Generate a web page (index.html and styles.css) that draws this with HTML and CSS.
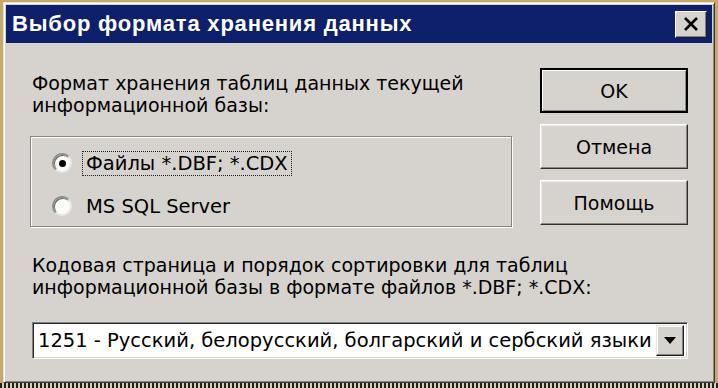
FILE: index.html
```html
<!DOCTYPE html>
<html lang="ru">
<head>
<meta charset="utf-8">
<title>Выбор формата хранения данных</title>
<link rel="stylesheet" href="styles.css">
</head>
<body>
<div class="window">
  <div class="titlebar">
    <span class="title">Выбор формата хранения данных</span>
    <button class="close" type="button" aria-label="Закрыть">
      <svg width="16" height="14" viewBox="0 0 16 14"><path d="M2 1 L14 13 M14 1 L2 13" stroke="#000" stroke-width="2.6" fill="none"/></svg>
    </button>
  </div>
  <div class="content">
    <div class="left">
      <p class="label">Формат хранения таблиц данных текущей<br>информационной базы:</p>
      <div class="group">
        <label class="row">
          <span class="radio checked"></span>
          <span class="rtext focus">Файлы *.DBF; *.CDX</span>
        </label>
        <label class="row">
          <span class="radio"></span>
          <span class="rtext">MS SQL Server</span>
        </label>
      </div>
    </div>
    <div class="buttons">
      <button class="btn default" type="button">OK</button>
      <button class="btn" type="button">Отмена</button>
      <button class="btn" type="button">Помощь</button>
    </div>
    <p class="label label2">Кодовая страница и порядок сортировки для таблиц<br>информационной базы в формате файлов *.DBF; *.CDX:</p>
    <div class="combo">
      <span class="ctext">1251 - Русский, белорусский, болгарский и сербский языки</span>
      <span class="drop"><svg width="12" height="7" viewBox="0 0 12 7"><path d="M0 0 H12 L6 7 Z" fill="#000"/></svg></span>
    </div>
  </div>
</div>
</body>
</html>
```

FILE: styles.css
```css
html, body {
  margin: 0;
  padding: 0;
}
body {
  width: 718px;
  height: 388px;
  overflow: hidden;
  background: #c6a962;
  background-image: repeating-linear-gradient(90deg, #222 0 2px, #d8d0b0 2px 4px);
  background-size: 100% 6px;
  background-position: 0 383px;
  background-repeat: no-repeat;
  font-family: "DejaVu Sans", Verdana, sans-serif;
  color: #000;
}
.window {
  box-sizing: border-box;
  width: 712px;
  height: 381px;
  margin: 2px 3px 0 3px;
  background: #d6d3ce;
  border: 1px solid;
  border-color: #e4e2dc #3a3a3a #3a3a3a #e4e2dc;
  box-shadow: inset 1px 1px 0 #fff, inset -1px -1px 0 #8a8782;
  padding: 2px;
}
.titlebar {
  height: 38px;
  background: #0e206b;
  display: flex;
  align-items: center;
  justify-content: space-between;
  padding: 0 5px 0 6px;
}
.title {
  color: #fff;
  font-family: "Liberation Sans", Arial, sans-serif;
  font-weight: bold;
  font-size: 22px;
  letter-spacing: 0.8px;
}
.close {
  width: 32px;
  height: 27px;
  padding: 0;
  margin: 0;
  background: #d6d3ce;
  border: 1px solid;
  border-color: #fff #202020 #202020 #fff;
  box-shadow: inset -1px -1px 0 #808080;
  display: flex;
  align-items: center;
  justify-content: center;
}
.content {
  display: grid;
  grid-template-columns: 482px 148px;
  column-gap: 28px;
  padding: 25px 24px 0 24px;
}
.label {
  margin: 0;
  font-size: 19px;
  line-height: 22px;
  padding-left: 2px;
  white-space: nowrap;
}
.left .label {
  margin-top: 4px;
}
.group {
  margin-top: 20px;
  height: 91px;
  box-sizing: border-box;
  border: 1px solid #858580;
  box-shadow: inset 1px 1px 0 #fff, 1px 1px 0 #fff;
  padding: 8px 0 0 21px;
  display: flex;
  flex-direction: column;
  gap: 7px;
}
.row {
  height: 36px;
  display: flex;
  align-items: center;
  gap: 10px;
}
.radio {
  box-sizing: border-box;
  width: 20px;
  height: 20px;
  border-radius: 50%;
  background: #fbfbfa;
  border: 2px solid;
  border-color: #8a8a86 #e8e8e6 #e8e8e6 #8a8a86;
  box-shadow: inset 1px 1px 0 #6a6a66;
  display: flex;
  align-items: center;
  justify-content: center;
}
.radio.checked::after {
  content: "";
  width: 7px;
  height: 7px;
  border-radius: 50%;
  background: #000;
}
.rtext {
  font-size: 19.5px;
  line-height: 23px;
  padding: 0 3px;
  border: 1px dotted transparent;
}
.rtext.focus {
  border-color: #222;
}
.buttons {
  display: flex;
  flex-direction: column;
  gap: 11px;
}
.btn {
  box-sizing: border-box;
  width: 148px;
  height: 45px;
  margin: 0;
  padding: 0;
  background: #d6d3ce;
  font-family: "DejaVu Sans", Verdana, sans-serif;
  font-size: 19px;
  color: #000;
  border: 1px solid;
  border-color: #fff #303030 #303030 #fff;
  box-shadow: inset -1px -1px 0 #8a8782, inset 1px 1px 0 #ecebe8;
}
.btn.default {
  border: 2px solid #000;
  box-shadow: inset 1px 1px 0 #fff, inset -1px -1px 0 #8a8782;
}
.label2 {
  grid-column: 1 / -1;
  margin-top: 27px;
}
.combo {
  grid-column: 1 / -1;
  box-sizing: border-box;
  margin: 24px 0 0 2px;
  width: 656px;
  height: 37px;
  background: #fff;
  border: 1px solid;
  border-color: #808080 #fff #fff #808080;
  box-shadow: inset 1px 1px 0 #2a2a2a, inset -1px -1px 0 #d6d3ce;
  display: flex;
  align-items: center;
  justify-content: space-between;
  padding: 2px 3px 2px 5px;
}
.ctext {
  font-size: 19.5px;
  white-space: nowrap;
  overflow: hidden;
}
.drop {
  flex-shrink: 0;
  box-sizing: border-box;
  width: 28px;
  height: 31px;
  background: #d6d3ce;
  border: 1px solid;
  border-color: #e8e6e2 #202020 #202020 #e8e6e2;
  box-shadow: inset -1px -1px 0 #808080, inset 1px 1px 0 #fff;
  display: flex;
  align-items: center;
  justify-content: center;
}
```
